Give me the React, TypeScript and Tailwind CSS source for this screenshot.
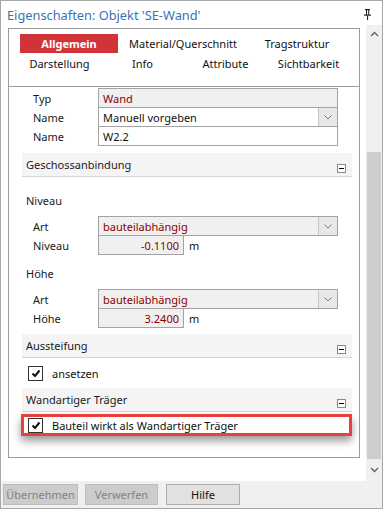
import React from "react";

const font = { fontFamily: '"Noto Sans", "Segoe UI", Arial, sans-serif' };

function Chevron({ up = false }: { up?: boolean }) {
  return (
    <svg width="9" height="6" viewBox="0 0 9 6" className="block">
      <polyline
        points={up ? "1,5 4.5,1.5 8,5" : "1,1 4.5,4.5 8,1"}
        fill="none"
        stroke="#606060"
        strokeWidth="1.4"
      />
    </svg>
  );
}

function SmallChevron() {
  return (
    <svg width="8" height="5" viewBox="0 0 8 5" className="block">
      <polyline points="0.5,0.5 4,4 7.5,0.5" fill="none" stroke="#7a7a7a" strokeWidth="1" />
    </svg>
  );
}

function Minus() {
  return (
    <div className="w-[9px] h-[9px] border border-[#8a8a8a] bg-white flex items-center justify-center mb-[3px] mr-[6px]">
      <div className="w-[5px] h-[1px] bg-black" />
    </div>
  );
}

function Check() {
  return (
    <div className="w-[15px] h-[15px] border border-[#333333] bg-white flex items-center justify-center">
      <svg width="10" height="9" viewBox="0 0 10 9">
        <polyline points="1.5,4.5 4,7 8.5,1.5" fill="none" stroke="#111" strokeWidth="2" />
      </svg>
    </div>
  );
}

function Header({ title }: { title: string }) {
  return (
    <div className="h-[24px] bg-[#f4f4f4] border-b border-[#d6d6d6] flex justify-between items-end pl-[4px]">
      <span className="self-center text-[11px] text-[#1a1a1a] leading-none pb-[1px]">{title}</span>
      <Minus />
    </div>
  );
}

function Row({
  label,
  children,
}: {
  label: string;
  children: React.ReactNode;
}) {
  return (
    <div className="flex h-[20px] items-stretch">
      <div className="w-[76px] pl-[11px] flex items-center text-[11px] text-[#1a1a1a] leading-none">{label}</div>
      {children}
    </div>
  );
}

function Field({
  value,
  gray = false,
  red = false,
  dropdown = false,
}: {
  value: string;
  gray?: boolean;
  red?: boolean;
  dropdown?: boolean;
}) {
  return (
    <div
      className={`w-[240px] border border-[#a3a3a3] flex items-stretch ${gray ? "bg-[#f0f0f0]" : "bg-white"}`}
    >
      <div className={`flex-1 flex items-center pl-[4px] text-[11px] leading-none ${red ? "text-[#8b0000]" : "text-[#111]"}`}>
        {value}
      </div>
      {dropdown && (
        <div className="w-[19px] bg-[#e8e8e8] border-l border-[#c6c6c6] flex items-center justify-center">
          <SmallChevron />
        </div>
      )}
    </div>
  );
}

function NumField({ value }: { value: string }) {
  return (
    <div className="flex items-center">
      <div className="w-[86px] h-full border border-[#a3a3a3] bg-[#f0f0f0] flex items-center justify-end pr-[4px] text-[11px] leading-none text-[#8b0000]">
        {value}
      </div>
      <span className="ml-[5px] text-[11px] text-[#111] leading-none">m</span>
    </div>
  );
}

export default function App() {
  return (
    <div
      style={font}
      className="w-[383px] h-[509px] bg-white border border-[#a8a8a8] flex flex-col overflow-hidden"
    >
      {/* Title */}
      <div className="h-[24px] flex items-center justify-between pl-[6px] pr-[11px]">
        <span className="text-[12.8px] text-[#3a72b6] leading-none pt-[5px]">Eigenschaften: Objekt 'SE-Wand'</span>
        <svg width="7" height="11" viewBox="0 0 7 11" className="mt-[3px]">
          <rect x="1" y="0" width="5" height="1.2" fill="#222" />
          <rect x="2" y="1" width="1" height="5" fill="#222" />
          <rect x="4.2" y="1" width="1" height="5" fill="#222" />
          <rect x="0" y="5.5" width="7" height="1.2" fill="#222" />
          <rect x="3" y="6.5" width="1.1" height="4.5" fill="#222" />
        </svg>
      </div>

      {/* Middle */}
      <div className="h-[456px] flex">
        <div className="pt-[3px] pl-[7px]">
          <div className="w-[352px] h-[430px] border border-[#9c9c9c] flex flex-col">
            {/* Tabs */}
            <div className="h-[58px] border-b border-[#9c9c9c] pt-[5px] pl-[3px]">
              <div className="flex h-[19px]">
                <div className="w-[114px] flex justify-center">
                  <div className="w-[98px] h-[19px] bg-[#d13438] text-white font-bold text-[11px] flex items-center justify-center leading-none">
                    Allgemein
                  </div>
                </div>
                <div className="w-[114px] flex items-center justify-center text-[11px] leading-none text-[#111]">
                  Material/Querschnitt
                </div>
                <div className="w-[114px] flex items-center justify-center text-[11px] leading-none text-[#111]">
                  Tragstruktur
                </div>
              </div>
              <div className="flex h-[20px] pl-[6px]">
                {["Darstellung", "Info", "Attribute", "Sichtbarkeit"].map((t) => (
                  <div key={t} className="w-[83px] flex items-center justify-center text-[11px] leading-none text-[#111]">
                    {t}
                  </div>
                ))}
              </div>
            </div>

            {/* Content */}
            <div className="pl-[13px] pr-[7px] pt-[1px] flex flex-col">
              <Row label="Typ">
                <Field value="Wand" gray red />
              </Row>
              <div className="-mt-px">
                <Row label="Name">
                  <Field value="Manuell vorgeben" dropdown />
                </Row>
              </div>
              <div className="-mt-px">
                <Row label="Name">
                  <Field value="W2.2" />
                </Row>
              </div>

              <div className="mt-[7px]">
                <Header title="Geschossanbindung" />
              </div>

              <div className="h-[16px] mt-[15px] pl-[4px] flex items-center text-[11px] leading-none text-[#1a1a1a]">Niveau</div>
              <div className="mt-[8px]">
                <Row label="Art">
                  <Field value="bauteilabhängig" gray red dropdown />
                </Row>
              </div>
              <div className="-mt-px">
                <Row label="Niveau">
                  <NumField value="-0.1100" />
                </Row>
              </div>

              <div className="h-[16px] mt-[10px] pl-[4px] flex items-center text-[11px] leading-none text-[#1a1a1a]">Höhe</div>
              <div className="mt-[8px]">
                <Row label="Art">
                  <Field value="bauteilabhängig" gray red dropdown />
                </Row>
              </div>
              <div className="-mt-px">
                <Row label="Höhe">
                  <NumField value="3.2400" />
                </Row>
              </div>

              <div className="mt-[6px]">
                <Header title="Aussteifung" />
              </div>
              <div className="h-[30px] flex items-center pl-[6px] gap-[9px]">
                <Check />
                <span className="text-[11px] leading-none text-[#111]">ansetzen</span>
              </div>
              <Header title="Wandartiger Träger" />
              <div className="mt-[2px] -ml-px h-[22px] border-[3px] border-[#e8403f] shadow-[0_5px_8px_rgba(0,0,0,0.4)] flex items-center pl-[4px] gap-[9px] bg-white">
                <Check />
                <span className="text-[11px] leading-none text-[#111]">Bauteil wirkt als Wandartiger Träger</span>
              </div>
            </div>
          </div>
        </div>

        {/* Scrollbar */}
        <div className="ml-auto w-[16px] h-full bg-[#f0f0f0] flex flex-col">
          <div className="h-[17px] flex items-center justify-center">
            <Chevron up />
          </div>
          <div className="flex-1 flex flex-col">
            <div className="h-[110px]" />
            <div className="flex-1 bg-[#cdcdcd] mx-[1px]" />
          </div>
          <div className="h-[22px] flex items-center justify-center">
            <Chevron />
          </div>
        </div>
      </div>

      {/* Bottom bar */}
      <div className="flex-1 bg-[#f0f0f0] flex items-start pt-[3px] pl-[2px]">
        <div className="w-[75px] h-[21px] bg-[#cccccc] border border-[#bdbdbd] flex items-center justify-center text-[11px] leading-none text-[#838383]">
          Übernehmen
        </div>
        <div className="ml-[7px] w-[73px] h-[21px] bg-[#cccccc] border border-[#bdbdbd] flex items-center justify-center text-[11px] leading-none text-[#838383]">
          Verwerfen
        </div>
        <div className="ml-[8px] w-[74px] h-[21px] bg-[#e1e1e1] border border-[#adadad] flex items-center justify-center text-[11px] leading-none text-[#111]">
          Hilfe
        </div>
      </div>
    </div>
  );
}
